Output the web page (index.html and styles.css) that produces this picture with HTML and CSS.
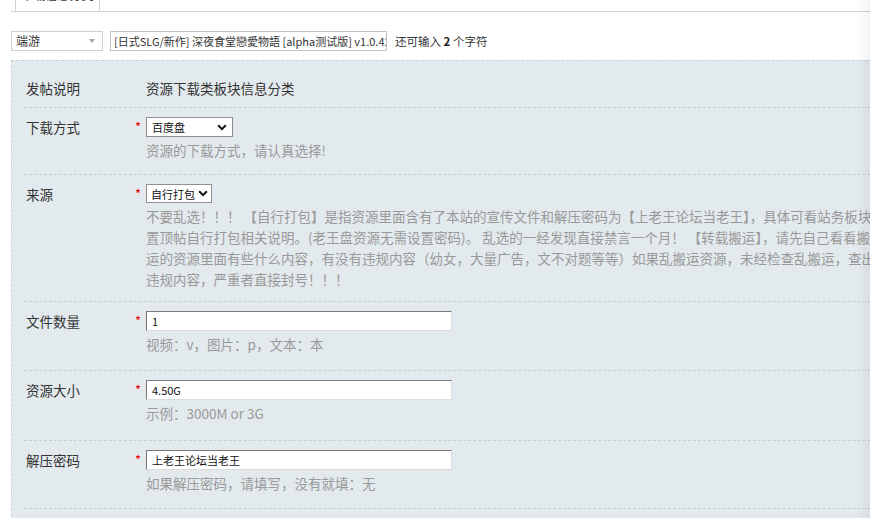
FILE: index.html
```html
<!DOCTYPE html>
<html lang="zh-CN">
<head>
<meta charset="utf-8">
<title>发帖</title>
<link rel="stylesheet" href="styles.css">
</head>
<body>
<div class="page">
  <div class="tabs"><div class="tab">下载信息分类</div></div>

  <div class="titlebar">
    <div class="type-select">端游<span class="tri"></span></div>
    <div class="title-input">[日式SLG/新作] 深夜食堂戀愛物語 [alpha测试版] v1.0.42</div>
    <span class="count">还可输入 <b>2</b> 个字符</span>
  </div>

  <div class="panel">
    <div class="row row-info">
      <div class="label">发帖说明</div>
      <div class="star"></div>
      <div class="content"><div class="info">资源下载类板块信息分类</div></div>
    </div>

    <div class="row row-dl">
      <div class="label">下载方式</div>
      <div class="star">*</div>
      <div class="content">
        <div class="select sel-dl">百度盘<svg class="chev" width="10" height="7" viewBox="0 0 10 7"><path d="M1.2 1.3 L5 5.1 L8.8 1.3" fill="none" stroke="#111" stroke-width="2"/></svg></div>
        <div class="hint"><div class="hl">资源的下载方式，请认真选择!</div></div>
      </div>
    </div>

    <div class="row row-src">
      <div class="label">来源</div>
      <div class="star">*</div>
      <div class="content">
        <div class="select sel-src">自行打包<svg class="chev" width="10" height="7" viewBox="0 0 10 7"><path d="M1.2 1.3 L5 5.1 L8.8 1.3" fill="none" stroke="#111" stroke-width="2"/></svg></div>
        <div class="hint">
          <div class="hl">不要乱选！！！ 【自行打包】是指资源里面含有了本站的宣传文件和解压密码为【上老王论坛当老王】，具体可看站务板块</div>
          <div class="hl">置顶帖自行打包相关说明。(老王盘资源无需设置密码)。 乱选的一经发现直接禁言一个月！ 【转载搬运】，请先自己看看搬</div>
          <div class="hl">运的资源里面有些什么内容，有没有违规内容（幼女，大量广告，文不对题等等）如果乱搬运资源，未经检查乱搬运，查出</div>
          <div class="hl">违规内容，严重者直接封号！！！</div>
        </div>
      </div>
    </div>

    <div class="row row-count">
      <div class="label">文件数量</div>
      <div class="star">*</div>
      <div class="content">
        <div class="input">1</div>
        <div class="hint"><div class="hl">视频：v，图片：p，文本：本</div></div>
      </div>
    </div>

    <div class="row row-size">
      <div class="label">资源大小</div>
      <div class="star">*</div>
      <div class="content">
        <div class="input">4.50G</div>
        <div class="hint"><div class="hl">示例：3000M or 3G</div></div>
      </div>
    </div>

    <div class="row">
      <div class="label">解压密码</div>
      <div class="star">*</div>
      <div class="content">
        <div class="input">上老王论坛当老王</div>
        <div class="hint"><div class="hl">如果解压密码，请填写，没有就填：无</div></div>
      </div>
    </div>
  </div>
</div>
<div class="edge-shade"></div>
</body>
</html>
```

FILE: styles.css
```css
html, body {
  margin: 0;
  padding: 0;
  background: #fff;
  overflow: hidden;
}
body {
  font-family: "Noto Sans CJK SC", "Noto Sans", "Liberation Sans", sans-serif;
  font-size: 13.5px;
  color: #333;
}
.page {
  width: 1300px;
}

/* tab strip */
.tabs {
  margin-left: 11px;
  height: 11px;
  border-bottom: 1px solid #d2d2d2;
  padding-left: 4px;
  display: flex;
  align-items: flex-end;
}
.tab {
  width: 85px;
  height: 26px;
  margin-top: -15px;
  margin-bottom: -1px;
  box-sizing: border-box;
  border: 1px solid #d2d2d2;
  border-bottom: 1px solid #fff;
  background: #fff;
  font-size: 12px;
  line-height: 18px;
  text-align: center;
  color: #333;
  align-self: flex-start;
}

/* title row */
.titlebar {
  margin: 19px 0 0 11px;
  display: flex;
  align-items: center;
  height: 20px;
  font-size: 11.5px;
}
.type-select {
  width: 92px;
  height: 20px;
  box-sizing: border-box;
  border: 1px solid #cfcfcf;
  padding-left: 4px;
  line-height: 18px;
  font-size: 12px;
  color: #333;
  display: flex;
  justify-content: space-between;
  align-items: center;
}
.tri {
  width: 0;
  height: 0;
  border-left: 3.5px solid transparent;
  border-right: 3.5px solid transparent;
  border-top: 4px solid #a8a8a8;
  margin-right: 7px;
}
.title-input {
  margin-left: 7px;
  width: 277px;
  height: 20px;
  box-sizing: border-box;
  border: 1px solid #c4c4c4;
  padding: 0 3px;
  line-height: 18px;
  font-size: 11px;
  white-space: nowrap;
  overflow: hidden;
  color: #333;
}
.count {
  margin-left: 8px;
  color: #333;
}
.count b {
  color: #222;
}

/* panel */
.panel {
  margin: 9px 0 0 11px;
  background: #e3eaee;
  border-top: 1px dashed #c3d2dc;
  border-left: 1px dashed #c9d3d9;
  padding: 0 0 0 12px;
  height: 460px;
}
.row {
  display: grid;
  grid-template-columns: 108px 12px 1fr;
  padding: 9px 0 14px 2px;
  border-bottom: 1px dashed #c7ccd0;
}
.row-info {
  padding: 17px 0 9px 2px;
}
.row-dl {
  padding-bottom: 13px;
}
.row-src {
  padding-bottom: 11px;
}
.row-count {
  padding-bottom: 15px;
}
.row-size {
  padding-bottom: 16px;
}
.label {
  height: 20px;
  line-height: 20px;
  color: #333;
}
.star {
  height: 20px;
  line-height: 20px;
  text-align: right;
  padding-right: 5px;
  font-size: 13px;
  color: #e60000;
}
.info {
  height: 20px;
  line-height: 20px;
  color: #333;
}
.hint {
  margin-top: 3px;
  color: #999;
  white-space: nowrap;
}
.hl {
  height: 21px;
  line-height: 21px;
}

.select {
  height: 20px;
  box-sizing: border-box;
  border: 1px solid #8f8f8f;
  background: #fff;
  font-size: 11px;
  line-height: 18px;
  padding-left: 5px;
  color: #111;
  display: flex;
  align-items: center;
  justify-content: space-between;
}
.sel-dl {
  width: 87px;
}
.sel-dl .chev {
  margin-right: 5px;
}
.sel-src {
  width: 66px;
  height: 19px;
  padding-left: 4px;
}
.sel-src .chev {
  margin-right: 3px;
}

.input {
  width: 306px;
  height: 20px;
  box-sizing: border-box;
  border: 1px solid;
  border-color: #7a7a7a #dcdcdc #dcdcdc #7a7a7a;
  background: #fff;
  font-size: 11px;
  line-height: 18px;
  padding-left: 5px;
  color: #111;
}

.edge-shade {
  position: fixed;
  top: 0;
  right: 0;
  bottom: 0;
  width: 12px;
  background: linear-gradient(to right, rgba(0,0,0,0), rgba(0,0,0,0.05));
  pointer-events: none;
}
```
